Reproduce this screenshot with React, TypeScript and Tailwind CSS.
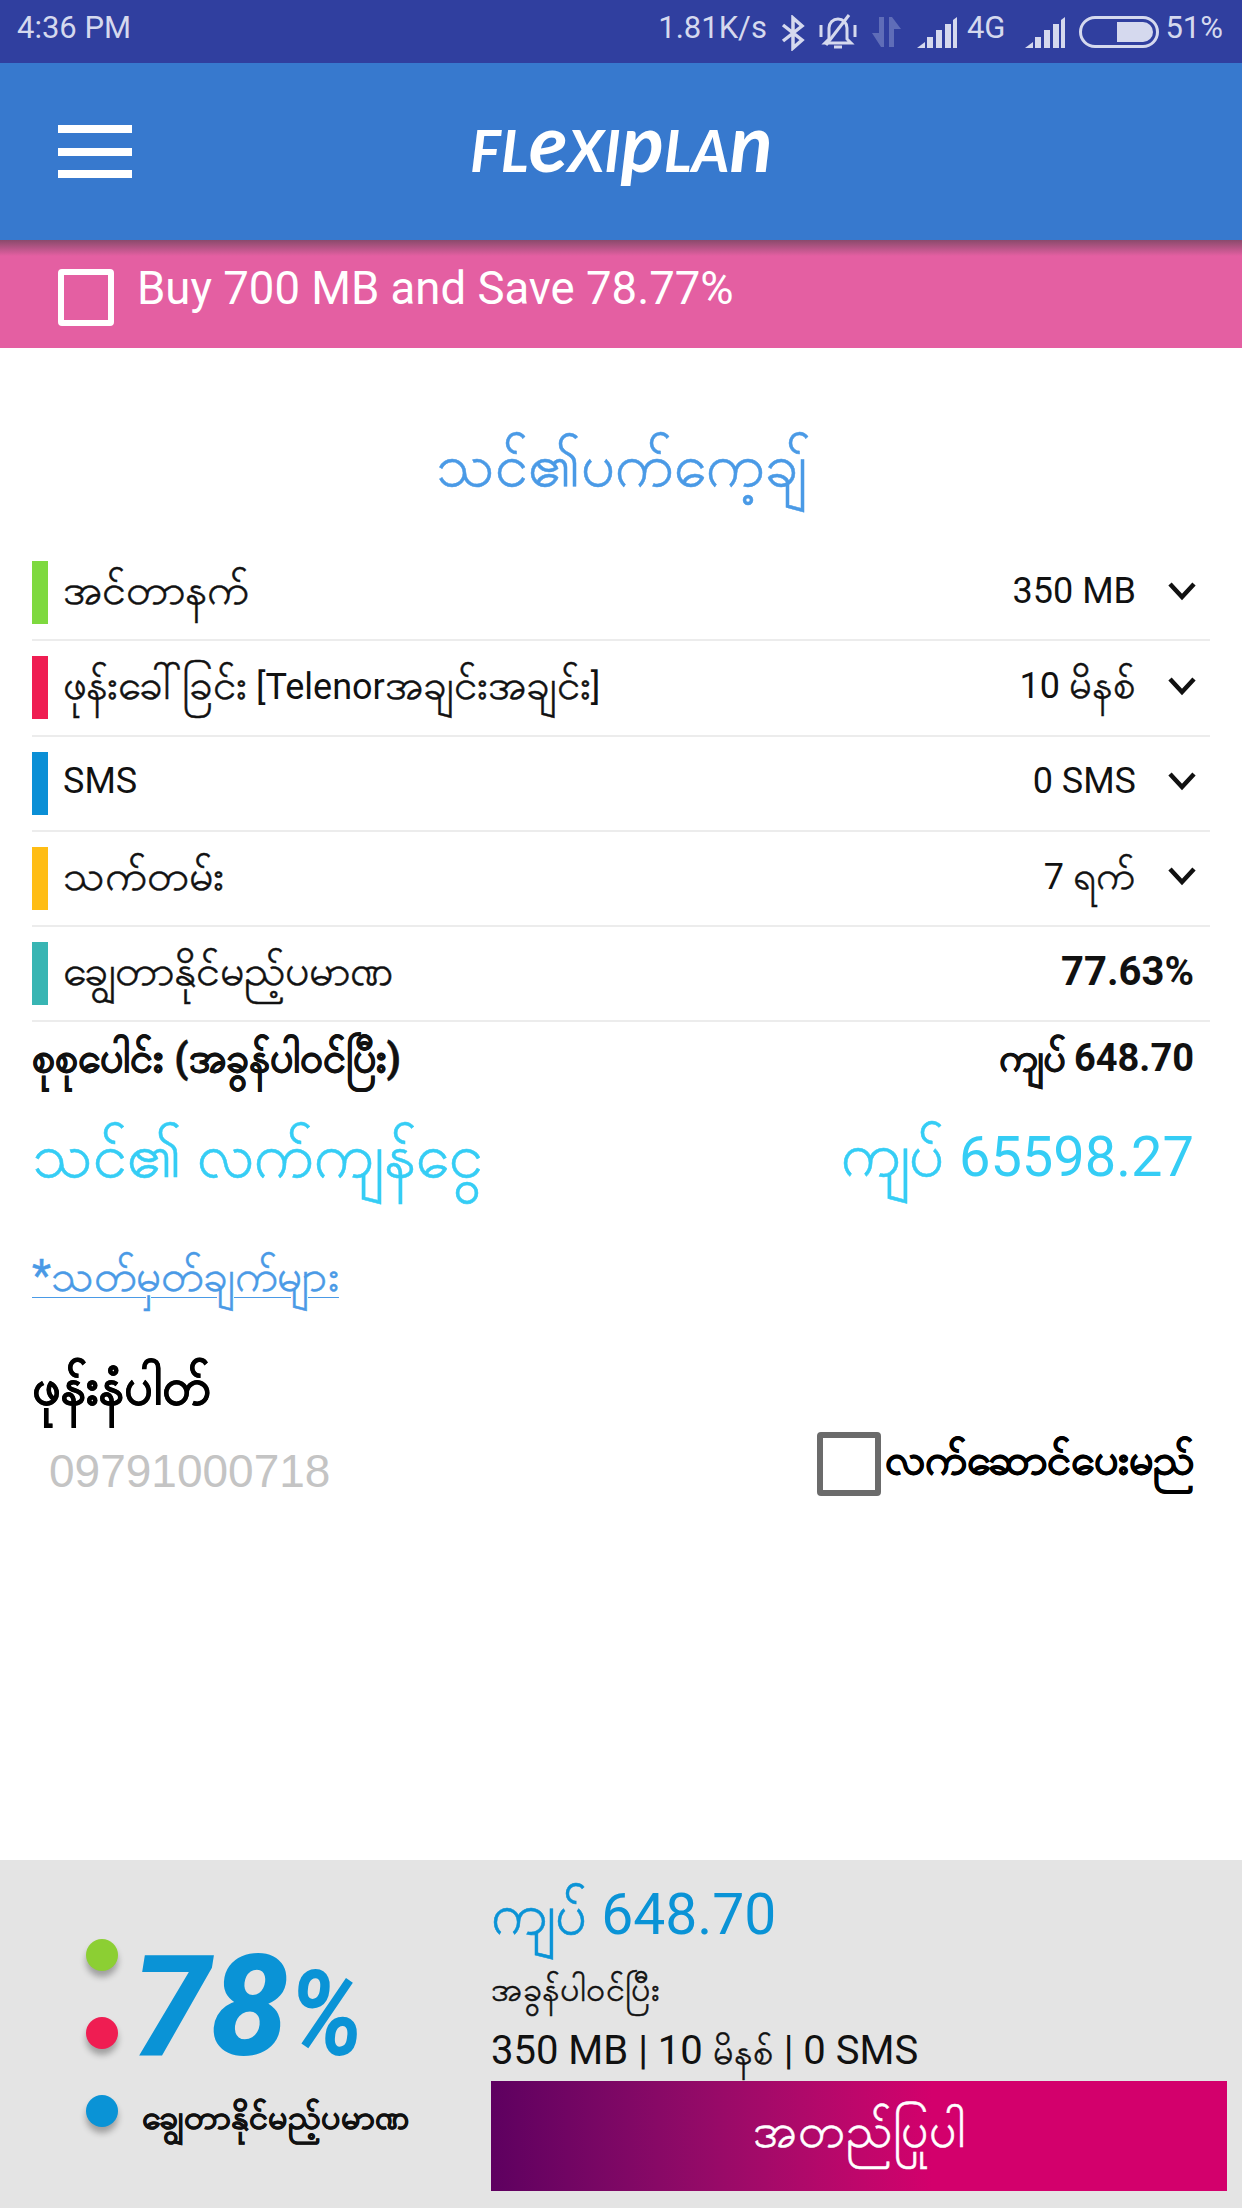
import type { ReactNode } from 'react';

// Burmese runs sit in a larger size than the Latin around them
function My({ size, children }: { size: string; children: ReactNode }) {
  return <span className={`${size} [-webkit-text-stroke-width:0.5px]`}>{children}</span>;
}

const rows = [
  { color: 'bg-[#7ed93f]', label: <My size="text-[43px]">အင်တာနက်</My>, value: <>350 MB</> },
  {
    color: 'bg-[#ef1d52]',
    label: (
      <>
        <My size="text-[42px]">ဖုန်းခေါ်ခြင်း</My> [Telenor<My size="text-[42px]">အချင်းအချင်း</My>]
      </>
    ),
    value: (
      <>
        10 <My size="text-[40px]">မိနစ်</My>
      </>
    ),
  },
  { color: 'bg-[#0a8fd6]', label: <>SMS</>, value: <>0 SMS</> },
  {
    color: 'bg-[#ffbd14]',
    label: <My size="text-[43px]">သက်တမ်း</My>,
    value: (
      <>
        7 <My size="text-[40px]">ရက်</My>
      </>
    ),
  },
];

function Chevron() {
  return (
    <svg width="28" height="20" viewBox="0 0 28 20" fill="none" className="ml-[32px] shrink-0">
      <path d="M2 3 L14 16 L26 3" stroke="#111" strokeWidth="4.5" />
    </svg>
  );
}

function Signal() {
  return (
    <svg width="40" height="32" viewBox="0 0 40 32" fill="#d5d9ee">
      <path d="M0 32 L8 26 V32 Z" />
      <rect x="10" y="21" width="6" height="11" />
      <rect x="19" y="14" width="6" height="18" />
      <rect x="28" y="8" width="6" height="24" />
      <path d="M36 4 L40 1 V32 H36 Z" />
    </svg>
  );
}

function StatusBar() {
  return (
    <div className="h-[63px] shrink-0 bg-[#303f9f] flex items-center justify-between pl-[17px] pr-[19px] text-[#d5d9ee] text-[31px]">
      <span className="-mt-[6px]">4:36 PM</span>
      <div className="flex items-center">
        <span className="-mt-[6px]">1.81K/s</span>
        <svg width="24" height="36" viewBox="0 0 24 36" fill="none" stroke="#d5d9ee" strokeWidth="3.5" className="ml-[14px] mt-[2px]">
          <path d="M2 10 L21 25 L12 33 V3 L21 11 L2 26" />
        </svg>
        <svg width="38" height="38" viewBox="0 0 38 38" fill="none" stroke="#d5d9ee" strokeWidth="3" className="ml-[14px]">
          <path d="M10 26 V15 a9 9 0 0 1 18 0 V26 L32 30 H6 Z" />
          <path d="M15 34 H23" />
          <path d="M30 2 L7 32" />
          <path d="M2 12 V24 M36 12 V24" />
        </svg>
        <svg width="30" height="34" viewBox="0 0 30 34" fill="#5f6db8" className="ml-[14px]">
          <path d="M8 2 H13 V32 H10 L1 18 H8 Z" />
          <path d="M18 2 H21 L30 14 H23 V32 H18 Z" />
        </svg>
        <div className="ml-[16px]"><Signal /></div>
        <span className="ml-[10px] -mt-[6px]">4G</span>
        <div className="ml-[20px]"><Signal /></div>
        <div className="ml-[14px] w-[80px] h-[32px] rounded-full border-[3px] border-[#d5d9ee] p-[3px] flex justify-end">
          <div className="w-[36px] h-full bg-[#d5d9ee] rounded-r-full" />
        </div>
        <span className="ml-[6px] -mt-[6px]">51%</span>
      </div>
    </div>
  );
}

function Header() {
  return (
    <div className="h-[177px] shrink-0 bg-[#3779ce] flex items-center relative">
      <div className="ml-[58px] w-[74px] flex flex-col gap-[14.5px]">
        <div className="h-[8px] bg-white" />
        <div className="h-[8px] bg-white" />
        <div className="h-[8px] bg-white" />
      </div>
      <span className="absolute left-[470px] top-[48px] text-white italic font-bold text-[58px] leading-[76px] font-['Lato',sans-serif]">
        FL<span className="text-[80px] leading-[60px]">e</span>XI<span className="text-[80px] leading-[60px]">p</span>LA<span className="text-[80px] leading-[60px]">n</span>
      </span>
    </div>
  );
}

function PromoBar() {
  return (
    <div className="h-[108px] shrink-0 bg-[#e45fa2] relative flex items-center pl-[58px]">
      <div className="absolute inset-x-0 top-0 h-[16px] bg-gradient-to-b from-[#8a4a6c] to-[#e45fa2]" />
      <div className="relative w-[56px] h-[57px] mt-[6px] rounded-[4px] border-[6px] border-white" />
      <span className="relative ml-[23px] -mt-[10px] text-white text-[45.5px]">Buy 700 MB and Save 78.77%</span>
    </div>
  );
}

function Details() {
  return (
    <div className="flex-1 px-[32px]">
      <h1 className="pt-[78px] h-[198px] text-center text-[#4a9ae6] leading-[80px]">
        <My size="text-[60px]">သင်၏ပက်ကေ့ချ်</My>
      </h1>
      <div className="text-[36px] leading-[60px] text-[#111]">
        {rows.map((r, i) => (
          <div key={i} className="h-[95.25px] border-b-2 border-[#ececec] flex items-center">
            <div className={`${r.color} w-[16px] h-[63px] shrink-0`} />
            <span className="ml-[15px] flex-1 -mt-[4px]">{r.label}</span>
            <span className="-mt-[4px]">{r.value}</span>
            <div className="mr-[14px] flex -mt-[4px]"><Chevron /></div>
          </div>
        ))}
        <div className="h-[95.25px] border-b-2 border-[#ececec] flex items-center">
          <div className="bg-[#38b5b3] w-[16px] h-[63px] shrink-0" />
          <span className="ml-[15px] flex-1 -mt-[4px]"><My size="text-[43px]">ချွေတာနိုင်မည့်ပမာဏ</My></span>
          <span className="mr-[16px] -mt-[4px] font-bold text-[40px]">77.63%</span>
        </div>
      </div>
      <div className="h-[76px] flex items-center justify-between pr-[16px] text-[38px] leading-[60px] font-bold text-[#111]">
        <span className="-mt-[4px]"><My size="text-[41px]">စုစုပေါင်း (အခွန်ပါဝင်ပြီး)</My></span>
        <span className="-mt-[4px]"><My size="text-[40px]">ကျပ်</My> 648.70</span>
      </div>
      <div className="mt-[6px] h-[104px] flex items-center justify-between pr-[16px] text-[56px] leading-[100px] text-[#35cdf5]">
        <My size="text-[62px]">သင်၏ လက်ကျန်ငွေ</My>
        <span><My size="text-[62px]">ကျပ်</My> 65598.27</span>
      </div>
      <div className="mt-[33px] h-[76px] leading-[70px]">
        <span className="text-[#4a9ae6] underline underline-offset-[6px]">
          <My size="text-[44px]">*သတ်မှတ်ချက်များ</My>
        </span>
      </div>
      <div className="mt-[35px] h-[70px] leading-[70px] font-bold text-black">
        <My size="text-[50px]">ဖုန်းနံပါတ်</My>
      </div>
      <div className="mt-[7px] h-[70px] flex items-center justify-between pr-[16px]">
        <span className="ml-[17px] mt-[14px] text-[46px] leading-[60px] text-[#c4c4c4] font-['Liberation_Sans',sans-serif]">09791000718</span>
        <div className="flex items-center">
          <div className="w-[64px] h-[64px] rounded-[4px] border-[6px] border-[#6b6b6b]" />
          <span className="ml-[4px] font-bold text-black leading-[60px]"><My size="text-[43px]">လက်ဆောင်ပေးမည်</My></span>
        </div>
      </div>
    </div>
  );
}

function Dot({ color }: { color: string }) {
  return <div className={`w-[32px] h-[32px] rounded-full ${color} shadow-[0_6px_6px_rgba(0,0,0,0.3)]`} />;
}

function Summary() {
  return (
    <div className="h-[348px] shrink-0 bg-[#e4e4e4] flex">
      <div className="w-[491px] shrink-0 pl-[86px] pt-[79px] flex">
        <div className="flex flex-col gap-[46px] w-[46px] shrink-0">
          <Dot color="bg-[#8ccf33]" />
          <Dot color="bg-[#ef1d52]" />
          <Dot color="bg-[#0a93d6]" />
        </div>
        <div>
          <div className="-mt-[2px] h-[134px] text-[140px] leading-[140px] italic font-extrabold text-[#0a93d6] whitespace-nowrap">
            78<span className="inline-block origin-left scale-x-[0.88] text-[118px] font-bold">%</span>
          </div>
          <div className="mt-[16px] ml-[10px] h-[60px] leading-[60px] text-[34px] font-bold text-[#111] whitespace-nowrap">
            <My size="text-[34px]">ချွေတာနိုင်မည့်ပမာဏ</My>
          </div>
        </div>
      </div>
      <div className="flex-1 pr-[15px] flex flex-col">
        <div className="h-[84px] mt-[14px] text-[57px] leading-[80px] text-[#0a93d6]">
          <My size="text-[58px]">ကျပ်</My> 648.70
        </div>
        <div className="mt-[1px] h-[60px] leading-[60px] text-[#111]">
          <My size="text-[34px]">အခွန်ပါဝင်ပြီး</My>
        </div>
        <div className="h-[60px] mt-[2px] text-[40px] leading-[60px] text-[#111]">
          350 MB | 10 <My size="text-[36px]">မိနစ်</My> | 0 SMS
        </div>
        <button className="h-[110px] w-full bg-gradient-to-r from-[#5e0060] via-[#d3006c] via-60% to-[#d3006c] text-white leading-[60px]">
          <My size="text-[48px]">အတည်ပြုပါ</My>
        </button>
      </div>
    </div>
  );
}

export default function App() {
  return (
    <div className="w-[1242px] h-[2208px] bg-white flex flex-col overflow-hidden font-['Roboto',sans-serif]">
      <StatusBar />
      <Header />
      <PromoBar />
      <Details />
      <Summary />
    </div>
  );
}
